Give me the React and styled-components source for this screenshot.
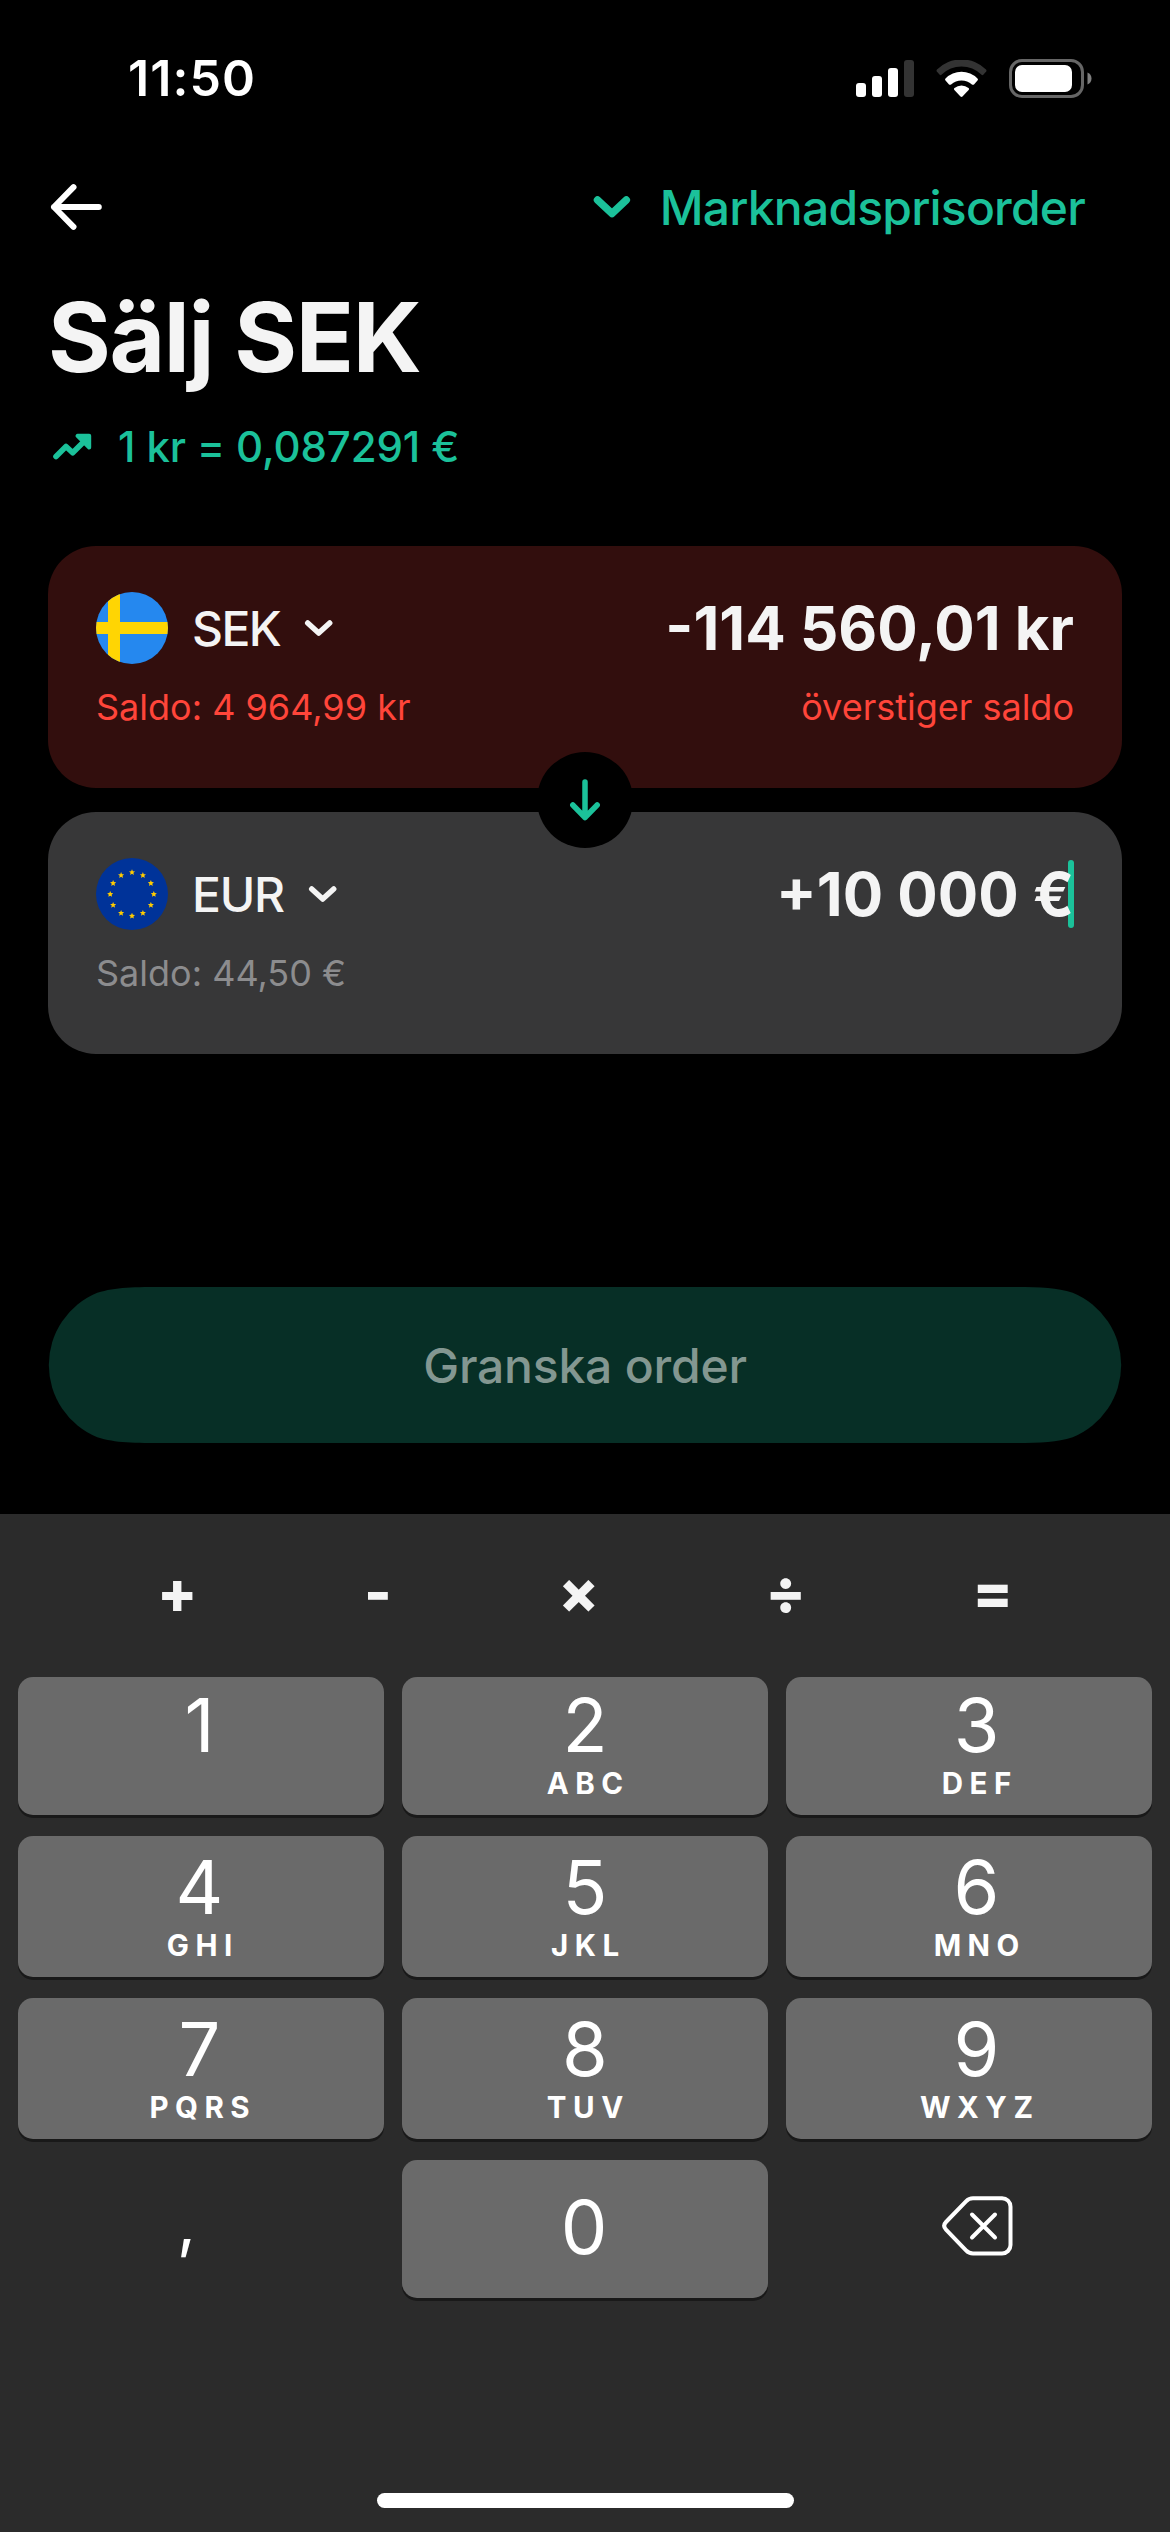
import styled, { createGlobalStyle } from "styled-components";

const currencies = {
  sell: {
    code: "SEK",
    amount: "-114 560,01 kr",
    balance: "Saldo: 4 964,99 kr",
    note: "överstiger saldo",
    spacing: "-1.6px",
    error: true,
  },
  buy: {
    code: "EUR",
    amount: "+10 000 €",
    balance: "Saldo: 44,50 €",
    spacing: "-1.2px",
    active: true,
  },
};

const operators = ["+", "-", "×", "÷", "="];

const keys = [
  { digit: "1" },
  { digit: "2", letters: "ABC" },
  { digit: "3", letters: "DEF" },
  { digit: "4", letters: "GHI" },
  { digit: "5", letters: "JKL" },
  { digit: "6", letters: "MNO" },
  { digit: "7", letters: "PQRS" },
  { digit: "8", letters: "TUV" },
  { digit: "9", letters: "WXYZ" },
];

const starPoints = (cx, cy, r) => {
  const points = [];
  for (let i = 0; i < 10; i++) {
    const radius = i % 2 === 0 ? r : r * 0.46;
    const angle = (Math.PI / 5) * i - Math.PI / 2;
    points.push(
      `${(cx + radius * Math.cos(angle)).toFixed(2)},${(
        cy +
        radius * Math.sin(angle)
      ).toFixed(2)}`
    );
  }
  return points.join(" ");
};

const SignalIcon = () => (
  <svg width="58" height="37" viewBox="0 0 58 37" fill="#fff">
    <rect x="0" y="23" width="10" height="14" rx="3" />
    <rect x="16" y="16" width="10" height="21" rx="3" />
    <rect x="32" y="8" width="10" height="29" rx="3" />
    <rect x="48" y="0" width="10" height="37" rx="3" fill="#333" />
  </svg>
);

const WifiIcon = () => (
  <svg width="51" height="37" viewBox="0 0 51 37" fill="#fff">
    <path
      d="M1 9.6A34.5 34.5 0 0 1 50 9.6Q51 10.7 50 11.8L47.3 14.7Q46.4 15.6 45.3 14.6A28 28 0 0 0 5.7 14.6Q4.6 15.6 3.7 14.7L1 11.8Q0 10.7 1 9.6Z"
      fill="#333"
    />
    <path d="M9.5 18.4A22.5 22.5 0 0 1 41.5 18.4Q42.5 19.5 41.5 20.6L38 24.4Q37 25.3 35.9 24.4A15.5 15.5 0 0 0 15.1 24.4Q14 25.3 13 24.4L9.5 20.6Q8.5 19.5 9.5 18.4Z" />
    <path d="M18.5 28A11 11 0 0 1 32.5 28Q33.6 29 32.6 30.1L26.5 36.5Q25.5 37.4 24.5 36.5L18.4 30.1Q17.4 29 18.5 28Z" />
  </svg>
);

const BatteryIcon = () => (
  <svg width="83" height="39" viewBox="0 0 83 39">
    <rect
      x="1.5"
      y="1.5"
      width="72"
      height="36"
      rx="11.5"
      fill="none"
      stroke="#666"
      strokeWidth="3"
    />
    <rect x="6" y="6" width="57" height="27" rx="7" fill="#fff" />
    <path
      d="M78.5 13.5C81 14.5 82.5 16.8 82.5 19.5S81 24.5 78.5 25.5Z"
      fill="#808080"
    />
  </svg>
);

const BackIcon = () => (
  <svg
    width="54"
    height="48"
    viewBox="0 0 54 48"
    fill="none"
    stroke="#fff"
    strokeWidth="6"
    strokeLinecap="round"
    strokeLinejoin="round"
  >
    <path d="M50.8 24H6M25.5 4.2L6 24L25.5 43.8" />
  </svg>
);

const OrderChevron = () => (
  <svg
    width="38"
    height="22"
    viewBox="0 0 38 22"
    fill="none"
    stroke="currentColor"
    strokeWidth="7.5"
    strokeLinecap="round"
    strokeLinejoin="round"
  >
    <path d="M4.5 4L19 17.5L33.3 4" />
  </svg>
);

const SmallChevron = () => (
  <svg
    width="30"
    height="18"
    viewBox="0 0 30 18"
    fill="none"
    stroke="currentColor"
    strokeWidth="5.5"
    strokeLinecap="round"
    strokeLinejoin="round"
  >
    <path d="M3.7 4L14.7 14L25.7 4" />
  </svg>
);

const TrendIcon = () => (
  <svg
    width="39"
    height="28"
    viewBox="0 0 39 28"
    fill="none"
    stroke="currentColor"
    strokeLinecap="round"
    strokeLinejoin="round"
  >
    <path d="M3 23.5L13 13.5L19.7 19.8L31 8.5" strokeWidth="5.6" />
    <path d="M24.5 2.8H36.2V14.5Z" strokeWidth="4" fill="currentColor" />
  </svg>
);

const DownIcon = () => (
  <svg
    width="32"
    height="42"
    viewBox="0 0 32 42"
    fill="none"
    stroke="#1bc19a"
    strokeWidth="5.5"
    strokeLinecap="round"
    strokeLinejoin="round"
  >
    <path d="M16 3V38.500M3.8 26L16 38.5L28.2 26" />
  </svg>
);

const DeleteIcon = () => (
  <svg
    width="71"
    height="60"
    viewBox="0 0 71 60"
    fill="none"
    stroke="#fff"
    strokeWidth="4"
    strokeLinecap="round"
    strokeLinejoin="round"
  >
    <path d="M31 2.2H60A8.5 8.5 0 0 1 68.5 10.7V49A8.5 8.5 0 0 1 60 57.5H31C28 57.5 26 56.5 24 54.4L4 33.7C1.6 31.2 1.6 28.5 4 26L24 5.3C26 3.2 28 2.2 31 2.2Z" />
    <path d="M30 18.5L53 41.5M53 18.5L30 41.5" />
  </svg>
);

const SwedenFlag = () => (
  <svg width="72" height="72" viewBox="0 0 72 72">
    <rect width="72" height="72" fill="#2588ef" />
    <rect x="12" width="12" height="72" fill="#ffd503" />
    <rect y="30" width="72" height="12" fill="#ffd503" />
  </svg>
);

const EuropeFlag = () => (
  <svg width="72" height="72" viewBox="0 0 72 72">
    <rect width="72" height="72" fill="#003399" />
    {[...Array(12).keys()].map((i) => {
      const angle = (Math.PI / 6) * i;
      return (
        <polygon
          key={i}
          points={starPoints(
            36 + 21.8 * Math.cos(angle),
            36.2 + 21.8 * Math.sin(angle),
            3.2
          )}
          fill="#ffcc00"
        />
      );
    })}
  </svg>
);

const CurrencyCard = ({ currency }) => {
  return (
    <Card $error={currency.error}>
      <CardRow>
        <Flag>{currency.code === "SEK" ? <SwedenFlag /> : <EuropeFlag />}</Flag>
        <Code $spacing={currency.spacing}>{currency.code}</Code>
        <SmallChevron />
        <AmountField>
          {currency.active && <Cursor />}
          <Amount>{currency.amount}</Amount>
        </AmountField>
      </CardRow>
      <CardFooter $error={currency.error}>
        <span>{currency.balance}</span>
        {currency.note && <span>{currency.note}</span>}
      </CardFooter>
    </Card>
  );
};

const App = () => {
  return (
    <Screen>
      <GlobalStyle />
      <StatusBar>
        <Time>11:50</Time>
        <StatusIcons>
          <SignalIcon />
          <WifiIcon />
          <BatteryIcon />
        </StatusIcons>
      </StatusBar>

      <NavBar>
        <IconButton aria-label="Tillbaka">
          <BackIcon />
        </IconButton>
        <OrderType>
          <OrderChevron />
          Marknadsprisorder
        </OrderType>
      </NavBar>

      <Title>Sälj SEK</Title>
      <Rate>
        <TrendIcon />
        <span>1 kr = 0,087291 €</span>
      </Rate>

      <Cards>
        <CurrencyCard currency={currencies.sell} />
        <CurrencyCard currency={currencies.buy} />
        <SwapBadge>
          <DownIcon />
        </SwapBadge>
      </Cards>

      <ReviewButton disabled>Granska order</ReviewButton>

      <Keyboard>
        <Operators>
          {operators.map((operator) => (
            <Operator key={operator}>{operator}</Operator>
          ))}
        </Operators>
        <KeyGrid>
          {keys.map((item, index) => (
            <Key key={item.digit} $lower={index > 2}>
              <Digit>{item.digit}</Digit>
              {item.letters && <Letters>{item.letters}</Letters>}
            </Key>
          ))}
          <PlainKey>
            <Comma>,</Comma>
          </PlainKey>
          <ZeroKey>
            <Digit>0</Digit>
          </ZeroKey>
          <PlainKey aria-label="Radera">
            <DeleteIcon />
          </PlainKey>
        </KeyGrid>
        <HomeIndicator />
      </Keyboard>
    </Screen>
  );
};

const GlobalStyle = createGlobalStyle`
  * {
    box-sizing: border-box;
  }

  body {
    margin: 0;
    background: #000;
  }

  button {
    border: none;
    margin: 0;
    padding: 0;
    background: transparent;
    font-family: inherit;
    color: inherit;
  }

  svg {
    display: block;
    flex-shrink: 0;
  }
`;

const Screen = styled.div`
  display: flex;
  flex-direction: column;
  width: 1170px;
  height: 2532px;
  overflow: hidden;
  background: #000;
  color: #f4f4f4;
  font-family: Inter, "Liberation Sans", sans-serif;
`;

const StatusBar = styled.div`
  display: flex;
  align-items: center;
  justify-content: space-between;
  height: 156px;
  padding: 0 78px 0 128px;
`;

const Time = styled.span`
  font-size: 50px;
  font-weight: 600;
  letter-spacing: 1.1px;
  color: #fff;
`;

const StatusIcons = styled.div`
  display: flex;
  align-items: center;
  gap: 22px;
`;

const NavBar = styled.div`
  display: flex;
  align-items: center;
  justify-content: space-between;
  height: 102px;
  padding: 0 85px 0 48px;
`;

const IconButton = styled.button`
  display: flex;
`;

const OrderType = styled.button`
  display: flex;
  align-items: center;
  gap: 29px;
  font-size: 48px;
  font-weight: 500;
  letter-spacing: -0.8px;
  color: #1bc19a;
`;

const Title = styled.h1`
  margin: 0;
  padding-left: 48px;
  font-size: 96px;
  font-weight: 700;
  line-height: 158px;
  letter-spacing: -1.4px;
`;

const Rate = styled.div`
  display: flex;
  align-items: center;
  gap: 26px;
  height: 61px;
  padding-left: 53px;
  font-size: 42px;
  font-weight: 500;
  letter-spacing: -0.1px;
  color: #1bc19a;
`;

const Cards = styled.div`
  position: relative;
  display: flex;
  flex-direction: column;
  gap: 24px;
  margin: 69px 48px 0;
`;

const Card = styled.div`
  height: 242px;
  padding: 46px 48px 0;
  border-radius: 48px;
  background: ${({ $error }) => ($error ? "#320e0d" : "#373738")};
`;

const CardRow = styled.div`
  display: flex;
  align-items: center;
  height: 72px;
`;

const Flag = styled.div`
  width: 72px;
  height: 72px;
  border-radius: 50%;
  overflow: hidden;
`;

const Code = styled.span`
  margin: 0 24px;
  font-size: 48px;
  font-weight: 500;
  letter-spacing: ${({ $spacing }) => $spacing};
`;

const AmountField = styled.div`
  position: relative;
  display: flex;
  align-items: center;
  height: 72px;
  margin-left: auto;
`;

const Amount = styled.span`
  position: relative;
  font-size: 60px;
  font-weight: 700;
  white-space: nowrap;
`;

const Cursor = styled.div`
  position: absolute;
  top: 2px;
  right: 0;
  width: 6px;
  height: 68px;
  border-radius: 3px;
  background: #1bc19a;
`;

const CardFooter = styled.div`
  display: flex;
  justify-content: space-between;
  margin-top: 18px;
  font-size: 36px;
  line-height: 50px;
  color: ${({ $error }) => ($error ? "#ff453a" : "#8c8c8e")};
`;

const SwapBadge = styled.div`
  position: absolute;
  top: 50%;
  left: 50%;
  display: flex;
  align-items: center;
  justify-content: center;
  width: 96px;
  height: 96px;
  border-radius: 50%;
  background: #000;
  transform: translate(-50%, -50%);
`;

const ReviewButton = styled.button`
  height: 156px;
  margin: 233px 48px 71px;
  flex-shrink: 0;
  background: #072f26;
  color: #839791;
  font-size: 48px;
  font-weight: 500;
  letter-spacing: -0.2px;
  clip-path: path(
    "M119 0H955C989 0 1006 0 1024.7 5.8A78 78 0 0 1 1024.7 150.2C1006 156 989 156 955 156H119C85 156 68 156 49.3 150.2A78 78 0 0 1 49.3 5.8C68 0 85 0 119 0Z"
  );
`;

const Keyboard = styled.div`
  display: flex;
  flex-direction: column;
  flex: 1;
  background: #2b2b2b;
`;

const Operators = styled.div`
  display: flex;
  align-items: center;
  justify-content: space-between;
  height: 163px;
  padding: 0 157px 9px;
`;

const Operator = styled.span`
  font-size: 59px;
  font-weight: 800;
  line-height: 1;
`;

const KeyGrid = styled.div`
  display: grid;
  grid-template-columns: repeat(3, 366px);
  grid-template-rows: 138px 141px 141px 138px;
  gap: 21px 18px;
  padding: 0 18px;
  color: #fff;
`;

const Key = styled.button`
  display: flex;
  flex-direction: column;
  align-items: center;
  justify-content: flex-start;
  padding-top: ${({ $lower }) => ($lower ? "14px" : "11px")};
  border-radius: 15px;
  background: #6a6a6a;
  box-shadow: 0 3px 0 #191919;

  &:nth-child(3n + 1) {
    padding-right: 3px;
  }

  &:nth-child(3n) {
    padding-left: 15px;
  }
`;

const ZeroKey = styled(Key)`
  justify-content: center;
  padding: 0 2px 4px 0;
`;

const PlainKey = styled.button`
  display: flex;
  align-items: center;
  justify-content: center;
  padding-bottom: 7px;

  &:nth-child(3n + 1) {
    padding: 0 29px 14px 0;
  }

  &:nth-child(3n) {
    padding-left: 16px;
  }
`;

const Digit = styled.span`
  font-size: 74px;
  font-weight: 400;
  line-height: 74px;
`;

const Letters = styled.span`
  margin-right: -6.5px;
  font-size: 29.5px;
  font-weight: 700;
  line-height: 43px;
  letter-spacing: 6.5px;
`;

const Comma = styled.span`
  font-size: 66px;
  font-weight: 400;
  line-height: 1;
`;

const HomeIndicator = styled.div`
  width: 417px;
  height: 15px;
  margin: auto auto 24px;
  border-radius: 8px;
  background: #fff;
`;

export default App;
